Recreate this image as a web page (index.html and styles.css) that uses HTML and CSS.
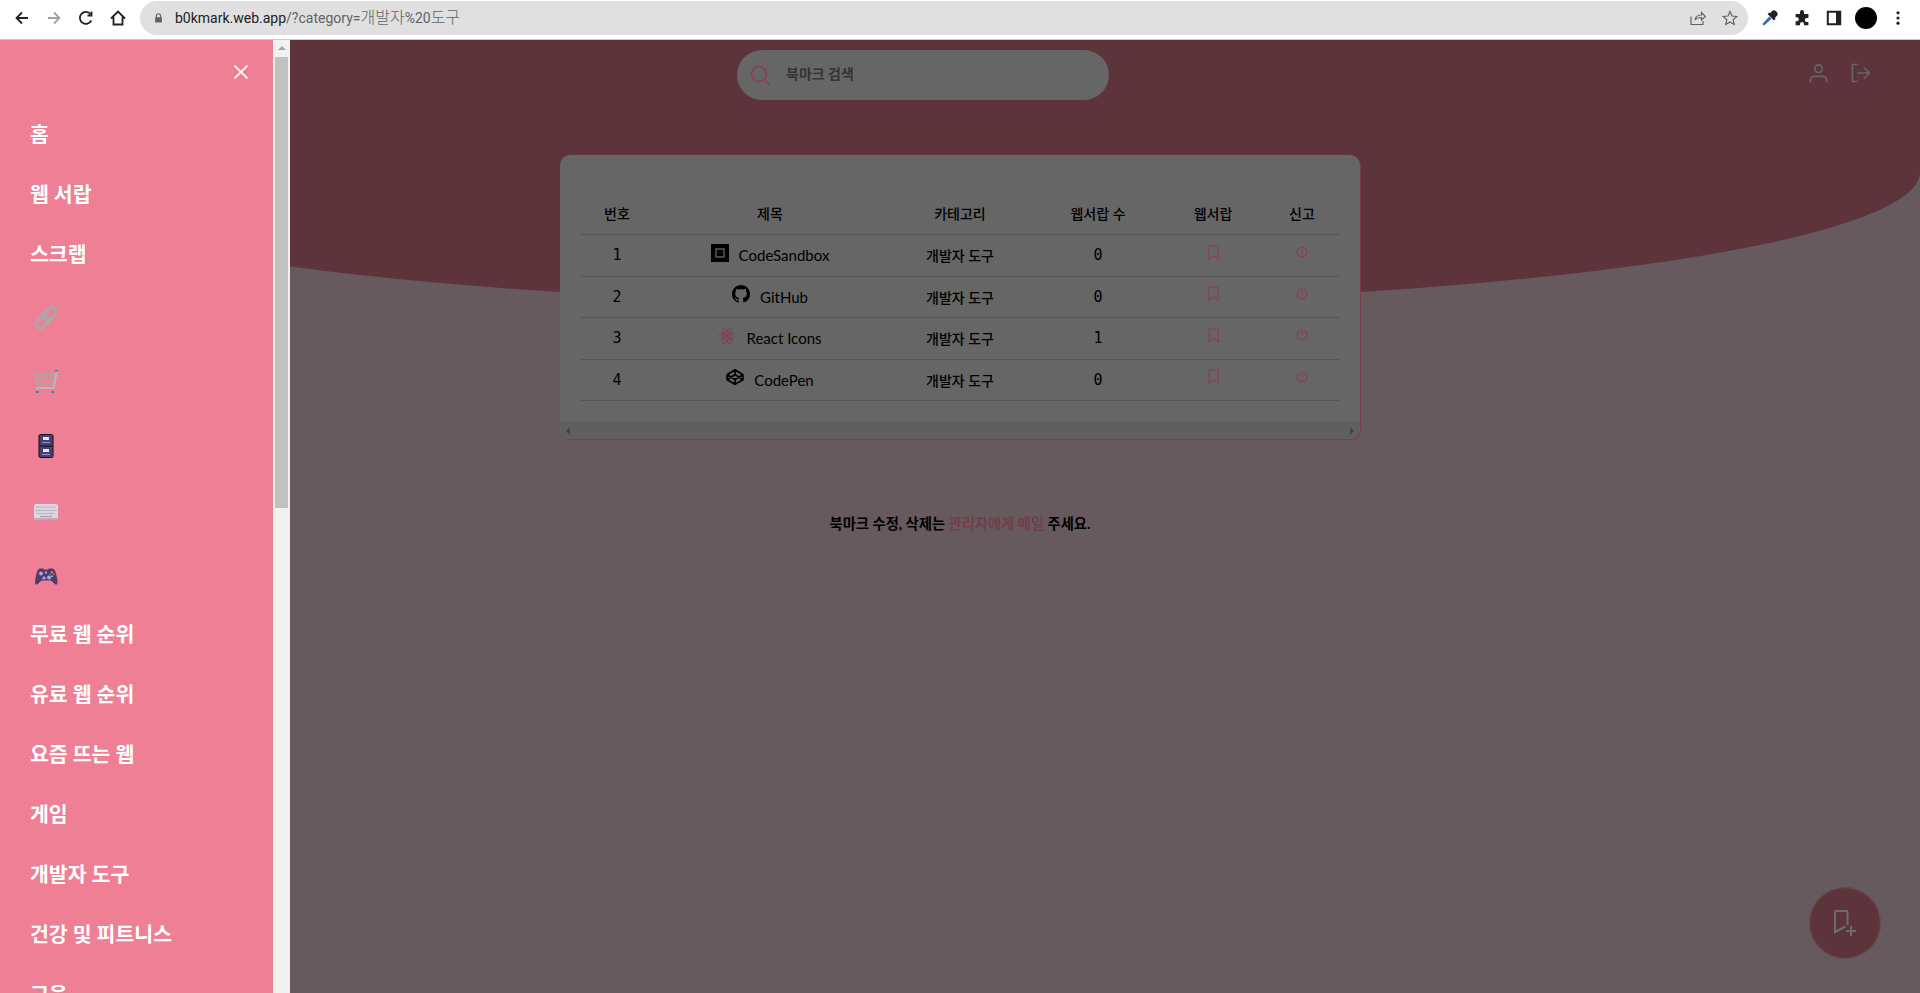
FILE: index.html
```html
<!DOCTYPE html>
<html lang="ko">
<head>
    <meta charset="UTF-8">
    <title>b0kmark</title>
    <link rel="stylesheet" href="styles.css">
</head>
<body>
    <div class="browser">
        <div class="navButtons">
            <svg class="navIcon" viewBox="0 0 16 16"><path d="M14 8H2.500M8 2.500 2.500 8 8 13.500"/></svg>
            <svg class="navIcon off" viewBox="0 0 16 16"><path d="M2 8h11.500M8 2.500 13.500 8 8 13.500"/></svg>
            <svg class="navIcon" viewBox="0 0 16 16"><path d="M13.300 10.500A6 6 0 1 1 12.500 4M13.500 1.500V5.500H9.500"/></svg>
            <svg class="navIcon" viewBox="0 0 16 16"><path d="M1 8.500 8 1.500l7 7M3.500 7v7.500h9V7"/></svg>
        </div>
        <div class="urlBar">
            <svg class="lock" viewBox="0 0 12 14"><path d="M2.500 6V4a3.500 3.500 0 0 1 7 0v2h1v7h-9V6zm1.500 0h4V4a2 2 0 0 0-4 0z"/></svg>
            <span class="url"><b>b0kmark.web.app</b>/?category=<span class="urlKo">개발자</span>%20<span class="urlKo">도구</span></span>
            <svg class="urlIcon" viewBox="0 0 16 16"><path d="M1 6.500V14.500H13V11M5 10c.5-3.500 3-5 6.500-5V2.500L15.500 6.500 11.500 10V7.500C8.500 7.500 6.500 8 5 10z"/></svg>
            <svg class="urlIcon" viewBox="0 0 16 16"><path d="M8 1.500 10 6l4.800.5-3.600 3.200 1 4.800L8 12l-4.200 2.500 1-4.800L1.200 6.500 6 6z"/></svg>
        </div>
        <div class="tools">
            <svg class="tool" viewBox="0 0 20 20"><path class="dropTip" d="M3 19l-2 0 0-2 8-9 3 3z"/><path d="M10 4l3-3c1-1 3-1 5 1s2 4 1 5l-3 3 1 1-2 2-8-8 2-2z"/></svg>
            <svg class="tool" viewBox="0 0 20 20"><path d="M7.500 2.500a2.500 2.500 0 0 1 5 0V5H18v5h-2a2.500 2.500 0 0 0 0 5h2v4H12.500v-1.500a2.500 2.500 0 0 0-5 0V19H2v-5H3.500a2.500 2.500 0 0 0 0-5H2V5h5.500z"/></svg>
            <svg class="tool" viewBox="0 0 20 20"><path fill-rule="evenodd" d="M1 1h18v18H1zM3.500 3.500v13h9v-13z"/></svg>
            <div class="avatar"></div>
            <svg class="tool" viewBox="0 0 20 20"><circle cx="10" cy="3.500" r="2"/><circle cx="10" cy="10" r="2"/><circle cx="10" cy="16.500" r="2"/></svg>
        </div>
    </div>

    <div class="app">
        <div class="hero">
            <div class="search">
                <svg class="searchIcon" viewBox="0 0 20 20"><circle cx="9" cy="9" r="7.500"/><path d="M14.500 14.500 19.500 19.500"/></svg>
                <span class="placeholder">북마크 검색</span>
            </div>
            <div class="userIcons">
                <svg class="userIcon" viewBox="0 0 20 20"><circle cx="10" cy="5.500" r="4"/><path d="M1.500 20v-2.500c0-2.500 2-4 4-4h9c2 0 4 1.500 4 4V20"/></svg>
                <svg class="userIcon" viewBox="0 0 20 20"><path d="M7 1H1.500V19H7M6.500 10H19M13.500 4 19.500 10 13.500 16"/></svg>
            </div>
        </div>

        <div class="card">
            <table class="bookmarks">
                <colgroup>
                    <col class="colNo"><col class="colTitle"><col class="colCategory"><col class="colCount"><col class="colSave"><col class="colReport">
                </colgroup>
                <thead>
                    <tr><th>번호</th><th>제목</th><th>카테고리</th><th>웹서랍 수</th><th>웹서랍</th><th>신고</th></tr>
                </thead>
                <tbody>
                    <tr>
                        <td class="num">1</td>
                        <td><div class="site">
                            <svg class="favicon" viewBox="0 0 18 18"><rect width="18" height="18" fill="#000"/><rect x="5" y="5" width="8" height="8" fill="none" stroke="#5a5a5a" stroke-width="1.500"/></svg>
                            <span>CodeSandbox</span>
                        </div></td>
                        <td>개발자 도구</td>
                        <td class="count">0</td>
                        <td><svg class="pinkIcon mark" viewBox="0 0 11 15"><path d="M1 1h9v13L5.500 10.500 1 14z"/></svg></td>
                        <td><svg class="pinkIcon alert" viewBox="0 0 12 12"><circle cx="6" cy="6" r="5"/><path d="M6 3v3.500M6 8v1"/></svg></td>
                    </tr>
                    <tr>
                        <td class="num">2</td>
                        <td><div class="site">
                            <svg class="favicon" viewBox="0 0 16 16"><path fill="#000" d="M8 0C3.580 0 0 3.580 0 8c0 3.540 2.290 6.530 5.470 7.590.4.070.55-.17.550-.38 0-.19-.01-.82-.01-1.490-2.010.37-2.530-.49-2.690-.94-.09-.23-.48-.94-.82-1.130-.28-.15-.68-.52-.01-.53.630-.01 1.080.58 1.230.82.720 1.210 1.870.870 2.330.660.070-.520.280-.870.510-1.070-1.780-.2-3.640-.89-3.640-3.950 0-.870.310-1.590.820-2.150-.080-.2-.360-1.020.080-2.120 0 0 .670-.210 2.200.820.640-.180 1.320-.270 2-.270s1.360.090 2 .270c1.530-1.040 2.200-.820 2.200-.820.440 1.100.160 1.920.080 2.120.510.560.820 1.270.820 2.150 0 3.070-1.870 3.750-3.650 3.950.290.250.540.730.540 1.480 0 1.070-.010 1.930-.010 2.200 0 .210.150.460.550.380A8.010 8.010 0 0 0 16 8c0-4.420-3.580-8-8-8z"/></svg>
                            <span>GitHub</span>
                        </div></td>
                        <td>개발자 도구</td>
                        <td class="count">0</td>
                        <td><svg class="pinkIcon mark" viewBox="0 0 11 15"><path d="M1 1h9v13L5.500 10.500 1 14z"/></svg></td>
                        <td><svg class="pinkIcon alert" viewBox="0 0 12 12"><circle cx="6" cy="6" r="5"/><path d="M6 3v3.500M6 8v1"/></svg></td>
                    </tr>
                    <tr>
                        <td class="num">3</td>
                        <td><div class="site">
                            <svg class="favicon atom" viewBox="0 0 18 18"><ellipse cx="9" cy="9" rx="8" ry="3.200"/><ellipse cx="9" cy="9" rx="8" ry="3.200" transform="rotate(60 9 9)"/><ellipse cx="9" cy="9" rx="8" ry="3.200" transform="rotate(120 9 9)"/><circle class="atomCore" cx="9" cy="9" r="1.500"/></svg>
                            <span>React Icons</span>
                        </div></td>
                        <td>개발자 도구</td>
                        <td class="count">1</td>
                        <td><svg class="pinkIcon mark" viewBox="0 0 11 15"><path d="M1 1h9v13L5.500 10.500 1 14z"/></svg></td>
                        <td><svg class="pinkIcon alert" viewBox="0 0 12 12"><circle cx="6" cy="6" r="5"/><path d="M6 3v3.500M6 8v1"/></svg></td>
                    </tr>
                    <tr>
                        <td class="num">4</td>
                        <td><div class="site">
                            <svg class="favicon pen" viewBox="0 0 16 16"><path d="M8 1.500 15 6v4.500L8 14.500 1 10.500V6zM8 1.500V5.800M8 14.500V10.200M1 6 8 10.200 15 6M1 10.500 8 5.800 15 10.500"/></svg>
                            <span>CodePen</span>
                        </div></td>
                        <td>개발자 도구</td>
                        <td class="count">0</td>
                        <td><svg class="pinkIcon mark" viewBox="0 0 11 15"><path d="M1 1h9v13L5.500 10.500 1 14z"/></svg></td>
                        <td><svg class="pinkIcon alert" viewBox="0 0 12 12"><circle cx="6" cy="6" r="5"/><path d="M6 3v3.500M6 8v1"/></svg></td>
                    </tr>
                </tbody>
            </table>
            <div class="hScroll">
                <span class="arrowLeft"></span>
                <span class="arrowRight"></span>
            </div>
        </div>

        <p class="notice">북마크 수정, 삭제는 <span class="mailLink">관리자에게 메일</span> 주세요.</p>

        <div class="fab">
            <svg class="fabIcon" viewBox="0 0 24 26"><path d="M12.500 16.500 2 22V2.500a1.500 1.500 0 0 1 1.500-1.500h9.500a1.500 1.500 0 0 1 1.500 1.500V15M13 21h10M18 16v10"/></svg>
        </div>

        <div class="drawer">
            <nav class="menu">
                <div class="closeRow">
                    <svg class="closeIcon" viewBox="0 0 14 14"><path d="M.5.5l13 13M13.500.5l-13 13"/></svg>
                </div>
                <a class="menuItem">홈</a>
                <a class="menuItem">웹 서랍</a>
                <a class="menuItem">스크랩</a>
                <a class="menuEmoji">
                    <svg viewBox="0 0 24 24"><g fill="none" stroke="#a9a9a9" stroke-width="3"><rect x="1" y="11.500" width="15" height="9" rx="4.500" transform="rotate(-45 8.500 16)"/><rect x="8" y="3.500" width="15" height="9" rx="4.500" transform="rotate(-45 15.500 8)"/></g></svg>
                </a>
                <a class="menuEmoji">
                    <svg viewBox="0 0 24 24"><g fill="none" stroke="#a8a8a8"><path stroke-width="1.500" d="M1 4.500h19L19 15H2.500z"/><path stroke-width=".8" d="M1.500 8h18M2 11.500h17M5 4.500v10M9 4.500v10M13 4.500v10M17 4.500v10"/><path stroke-width="2" stroke="#b9b9b9" d="M23 1 19.500 18H2"/></g><path fill="#1e88d8" d="M21 0h3v1.500h-3zM2 21h2.500v2H2zM17.500 21H20v2h-2.500z"/></svg>
                </a>
                <a class="menuEmoji">
                    <svg viewBox="0 0 24 24"><rect x="5" y="0.500" width="14" height="23" rx="1.500" fill="#4a3f75" stroke="#111" stroke-width="1"/><path stroke="#111" d="M5 12h14"/><path fill="#e8e4f4" d="M9 3h6v3H9zM9 15h6v3H9z"/><path fill="#9d90c8" d="M8 8h8v1H8zM8 20h8v1H8z"/></svg>
                </a>
                <a class="menuEmoji">
                    <svg viewBox="0 -1 24 24"><rect y="5" width="24" height="16" rx="2" fill="#dbd6df"/><rect y="19" width="24" height="2" fill="#b7aebb"/><path stroke="#a9a2b0" stroke-width="1.200" stroke-dasharray="2 .8" d="M2 8h20M1.500 11.500h21M3.500 14.500h17"/><path stroke="#a9a2b0" stroke-width="1.200" d="M6 17.500h12"/></svg>
                </a>
                <a class="menuEmoji">
                    <svg viewBox="0 -2.500 24 24"><path fill="#54386e" d="M6 4h3l1 1h4l1-1h3c2 0 3 1.500 4 5 1 4 1.500 7 1.500 9 0 1.500-1 2.500-2 2-1.500-.5-3-3.500-5-4H8c-2 .5-3.500 3.500-5 4-1 .5-2-.5-2-2 0-2 .5-5 1.500-9 1-3.500 2-5 3.500-5z"/><g fill="#a9a6ea"><circle cx="7" cy="9" r="2"/><circle cx="15" cy="13" r="2"/><path d="M11 7h2v2h-2zM8 13h4v1.200H8zM9.400 11.800h1.200v3.500H9.400z"/></g><path fill="#f5a623" d="M17 7h2v1.500h-2z"/><path fill="#2d8fe0" d="M15.500 9h2v1.500h-2z"/><path fill="#e34b4b" d="M19 9h2v1.500h-2z"/><path fill="#7ecb3f" d="M17 11h2v1.500h-2z"/></svg>
                </a>
                <a class="menuItem">무료 웹 순위</a>
                <a class="menuItem">유료 웹 순위</a>
                <a class="menuItem">요즘 뜨는 웹</a>
                <a class="menuItem">게임</a>
                <a class="menuItem">개발자 도구</a>
                <a class="menuItem">건강 및 피트니스</a>
                <a class="menuItem">교육</a>
            </nav>
            <div class="vScroll">
                <span class="arrowUp"></span>
                <div class="vThumb"></div>
            </div>
        </div>
    </div>
</body>
</html>
```

FILE: styles.css
```css
* {
    box-sizing: border-box;
}

html, body {
    margin: 0;
    height: 100%;
    overflow: hidden;
}

body {
    font-family: Lato, "Noto Sans CJK KR", sans-serif;
    color: #000;
    background: #665a5e;
}

/* browser toolbar */
.browser {
    height: 40px;
    display: flex;
    align-items: flex-start;
    background: #fff;
    border-bottom: 1px solid #c8c8c8;
}

.navButtons {
    width: 140px;
    height: 35px;
    padding-left: 14px;
    display: flex;
    align-items: center;
    gap: 16px;
}

.navIcon {
    width: 16px;
    height: 16px;
    fill: none;
    stroke: #202124;
    stroke-width: 1.800;
}

.navIcon.off {
    stroke: #a2a3a5;
}

.urlBar {
    width: 1608px;
    height: 34px;
    margin-top: 1px;
    padding: 0 10px 0 14px;
    display: flex;
    align-items: center;
    background: #e0e0e0;
    border-radius: 17px;
    font-family: Roboto, "Noto Sans CJK KR", sans-serif;
    font-size: 14px;
    color: #5f6368;
}

.lock {
    width: 9px;
    height: 12px;
    margin-right: 12px;
    fill: #5f6368;
}

.url {
    flex: 1;
}

.url b {
    font-weight: 400;
    color: #202124;
}

.urlKo {
    font-size: 16px;
    font-weight: 300;
    line-height: 1;
}

.urlIcon {
    width: 16px;
    height: 16px;
    margin-left: 16px;
    fill: none;
    stroke: #5f6368;
    stroke-width: 1.200;
}

.tools {
    flex: 1;
    height: 35px;
    padding-left: 6px;
    display: flex;
    align-items: center;
}

.tool {
    width: 16px;
    height: 16px;
    margin: 0 8px;
    fill: #202124;
}

.dropTip {
    fill: #3e63c9;
}

.avatar {
    width: 22px;
    height: 22px;
    margin: 0 5px;
    border-radius: 50%;
    background: #000;
}

/* page */
.app {
    position: relative;
    height: 953px;
    overflow: hidden;
}

.hero {
    height: 264px;
    padding-top: 10px;
    display: grid;
    grid-template-columns: 737px 372px 1fr;
    align-items: start;
    background: #5d343c;
    border-radius: 0 0 50% 50%;
}

.search {
    grid-column: 2;
    height: 50px;
    padding: 0 13px;
    display: flex;
    align-items: center;
    gap: 16px;
    background: #666;
    border-radius: 25px;
}

.searchIcon {
    width: 20px;
    height: 20px;
    fill: none;
    stroke: #8a3f52;
    stroke-width: 1.600;
}

.placeholder {
    font-size: 14px;
    font-weight: 700;
    color: #333;
    margin-top: -5px;
}

.userIcons {
    grid-column: 3;
    padding: 13px 50px 0 0;
    display: flex;
    justify-content: flex-end;
    gap: 23px;
}

.userIcon {
    width: 19px;
    height: 20px;
    fill: none;
    stroke: #666;
    stroke-width: 1.700;
}

.card {
    width: 800px;
    margin: -149px auto 0;
    padding-top: 38px;
    background: #666;
    border-radius: 10px;
    box-shadow: 1px 1px 1px #7d3c4b;
    overflow: hidden;
}

.bookmarks {
    width: 760px;
    margin: 0 auto 21px;
    border-collapse: collapse;
    table-layout: fixed;
    font-size: 14px;
    font-weight: 500;
    text-align: center;
}

.colNo { width: 74px; }
.colTitle { width: 232px; }
.colCategory { width: 148px; }
.colCount { width: 128px; }
.colSave { width: 102px; }
.colReport { width: 76px; }

.bookmarks th,
.bookmarks td {
    height: 41.500px;
    padding: 0;
    border-bottom: 1px solid #565656;
    font-size: 14px;
}

.bookmarks th {
    padding-bottom: 1px;
    font-weight: 500;
}

.bookmarks .num,
.bookmarks .count {
    font-family: "DejaVu Sans Mono", monospace;
    font-size: 15px;
    font-weight: 400;
}

.site {
    display: flex;
    justify-content: center;
    align-items: center;
    gap: 10px;
    font-size: 15px;
    font-weight: 400;
}

.favicon {
    width: 18px;
    height: 18px;
    margin-top: -5px;
}

.atom {
    fill: none;
    stroke: #843c4e;
    stroke-width: .9;
}

.atomCore {
    fill: #843c4e;
}

.pen {
    fill: none;
    stroke: #000;
    stroke-width: 1.500;
    margin-top: -6px;
}

.pinkIcon {
    fill: none;
    stroke: #8a3f52;
    stroke-width: 1.200;
    vertical-align: 3px;
}

.mark {
    width: 11px;
    height: 15px;
}

.alert {
    width: 12px;
    height: 12px;
}

.hScroll {
    height: 17px;
    padding: 0 6px;
    display: flex;
    align-items: center;
    justify-content: space-between;
    background: #5f5f5f;
}

.arrowLeft {
    border: 4px solid transparent;
    border-left: 0;
    border-right: 4px solid #454545;
}

.arrowRight {
    border: 4px solid transparent;
    border-right: 0;
    border-left: 4px solid #454545;
}

.notice {
    margin: 73px 0 0;
    text-align: center;
    font-size: 14.300px;
    font-weight: 700;
}

.mailLink {
    color: #703f4a;
}

.fab {
    position: absolute;
    left: 1809px;
    top: 847px;
    width: 72px;
    height: 72px;
    display: flex;
    align-items: center;
    justify-content: center;
    background: #5d343c;
    border-radius: 50%;
    box-shadow: inset 0 0 0 1px #6b5156;
}

.fabIcon {
    width: 24px;
    height: 26px;
    fill: none;
    stroke: #6c6c6c;
    stroke-width: 2;
}

/* side drawer */
.drawer {
    position: absolute;
    left: 0;
    top: 0;
    width: 290px;
    height: 953px;
    display: flex;
}

.menu {
    width: 273px;
    height: 953px;
    overflow: hidden;
    background: #ee7f95;
    color: #fff;
}

.closeRow {
    height: 64px;
    padding: 25px 25px 0 0;
    display: flex;
    justify-content: flex-end;
}

.closeIcon {
    width: 14px;
    height: 14px;
    fill: none;
    stroke: #fff;
    stroke-width: 1.600;
}

.menuItem {
    display: flex;
    align-items: center;
    height: 60px;
    padding: 0 0 2px 30px;
    font-size: 20.500px;
    font-weight: 700;
}

.menuEmoji {
    display: flex;
    align-items: center;
    height: 64px;
    padding: 4px 0 0 34px;
}

.menuEmoji svg {
    width: 24px;
    height: 24px;
}

.vScroll {
    position: relative;
    width: 17px;
    background: #f1f1f1;
}

.arrowUp {
    display: block;
    width: 0;
    margin: 6px auto 0;
    border: 4px solid transparent;
    border-top: 0;
    border-bottom: 4px solid #a3a3a3;
}

.vThumb {
    width: 13px;
    height: 451px;
    margin: 7px 2px 0;
    background: #c1c1c1;
}
```
